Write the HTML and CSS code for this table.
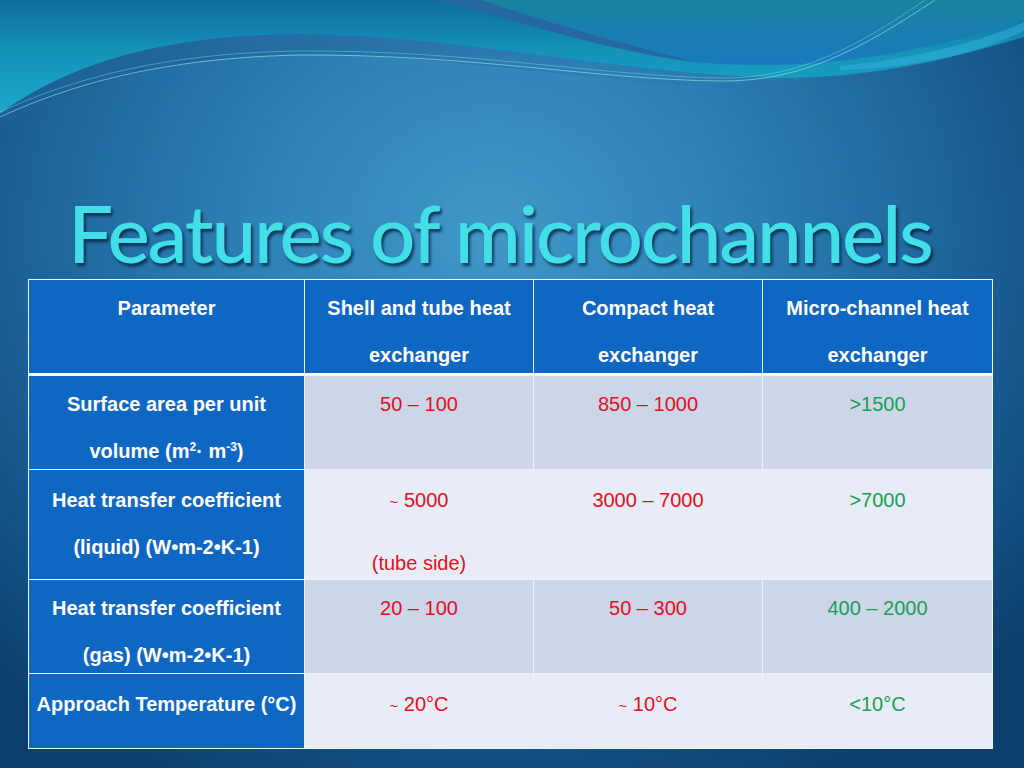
FILE: index.html
```html
<!DOCTYPE html>
<html lang="en">
<head>
<meta charset="utf-8">
<title>Features of microchannels</title>
<link rel="stylesheet" href="styles.css">
</head>
<body>
<div class="slide">
  <svg class="wave" width="1024" height="140" viewBox="0 0 1024 140" aria-hidden="true">
    <defs>
      <linearGradient id="gTop" x1="0" y1="0" x2="0" y2="1">
        <stop offset="0" stop-color="#0f6c9e"/>
        <stop offset="0.45" stop-color="#1594b8"/>
        <stop offset="1" stop-color="#1aa8c8"/>
      </linearGradient>
      <linearGradient id="gRight" x1="0" y1="0" x2="0" y2="1">
        <stop offset="0" stop-color="#17849f"/>
        <stop offset="1" stop-color="#1a7abf"/>
      </linearGradient>
      <linearGradient id="gBand" x1="0" y1="0" x2="1" y2="0">
        <stop offset="0" stop-color="#1a5f95" stop-opacity="0.85"/>
        <stop offset="0.45" stop-color="#24689f" stop-opacity="0.6"/>
        <stop offset="0.75" stop-color="#24689f" stop-opacity="0.25"/>
        <stop offset="1" stop-color="#24689f" stop-opacity="0"/>
      </linearGradient>
    </defs>
    <path d="M0,0 L1024,0 L1024,37 C960,56 880,78 780,78 C600,72 470,36 300,34 C150,35 60,70 0,114 Z" fill="url(#gTop)"/>
    <path d="M478,0 C540,20 620,46 705,63 C800,70 900,60 1024,20 L1024,0 Z" fill="url(#gRight)"/>
    <path d="M436,0 C520,22 610,52 706,64 C620,44 540,20 482,0 Z" fill="#2766a0" opacity="0.95"/>
    <path d="M840,66 C920,58 985,40 1024,22 L1024,31 C980,52 920,68 840,70 Z" fill="#35b2dc" opacity="0.5"/>
    <path d="M0,114 C60,70 150,35 300,34 C470,36 600,72 780,78 L780,90 C600,86 450,54 300,54 C160,56 70,88 0,128 Z" fill="url(#gBand)"/>
    <path d="M0,117 C70,85 160,58 300,55 C470,54 600,80 720,81 C800,82 860,50 935,0" fill="none" stroke="#9ae4ef" stroke-width="0.9" opacity="0.7"/>
    <path d="M0,112 C70,80 160,53 300,51 C470,50 600,76 720,78 C800,79 860,45 925,0" fill="none" stroke="#6fd8e6" stroke-width="0.8" opacity="0.6"/>
  </svg>

  <h1 class="title">Features of microchannels</h1>

  <div class="grid">
    <div class="cell head">Parameter</div>
    <div class="cell head">Shell and tube heat<br>exchanger</div>
    <div class="cell head">Compact heat<br>exchanger</div>
    <div class="cell head">Micro-channel heat<br>exchanger</div>

    <div class="cell key">Surface area per unit<br>volume (m<sup>2</sup>· m<sup>-3</sup>)</div>
    <div class="cell odd red">50 – 100</div>
    <div class="cell odd red">850 – 1000</div>
    <div class="cell odd green">&gt;1500</div>

    <div class="cell key low">Heat transfer coefficient<br>(liquid) (W•m-2•K-1)</div>
    <div class="cell even red low"><span class="tilde">~</span> 5000<span class="note">(tube side)</span></div>
    <div class="cell even red low">3000 – 7000</div>
    <div class="cell even green low">&gt;7000</div>

    <div class="cell key">Heat transfer coefficient<br>(gas) (W•m-2•K-1)</div>
    <div class="cell odd red">20 – 100</div>
    <div class="cell odd red">50 – 300</div>
    <div class="cell odd green">400 – 2000</div>

    <div class="cell key low">Approach Temperature (°C)</div>
    <div class="cell even red low"><span class="tilde">~</span> 20°C</div>
    <div class="cell even red low"><span class="tilde">~</span> 10°C</div>
    <div class="cell even green low">&lt;10°C</div>
  </div>
</div>
</body>
</html>
```

FILE: styles.css
```css
html, body {
  margin: 0;
  padding: 0;
}

.slide {
  position: relative;
  width: 1024px;
  height: 768px;
  overflow: hidden;
  background:
    radial-gradient(ellipse 70% 80% at 48% 30%, #4197c8 0%, #3084b8 30%, #1f689e 60%, #134f82 85%, #0c3f6b 100%);
  font-family: "Liberation Sans", Arial, sans-serif;
}

.wave {
  position: absolute;
  left: 0;
  top: 0;
  display: block;
}

.title {
  position: relative;
  margin: 0;
  box-sizing: border-box;
  height: 279px;
  padding: 184px 0 0 68px;
  font-family: Lato, "Open Sans", sans-serif;
  font-weight: 500;
  font-size: 80px;
  line-height: 96px;
  letter-spacing: -2.25px;
  color: #42dfe9;
  text-shadow: 2px 3px 3px rgba(5, 30, 60, 0.75);
  white-space: nowrap;
}

.grid {
  position: relative;
  margin-left: 28px;
  width: 965px;
  box-sizing: border-box;
  display: grid;
  grid-template-columns: 275px 228px 228px 229px;
  grid-template-rows: 95px 93px 109px 93px 74px;
  gap: 1px;
  border: 1px solid #eef2fa;
  background: #eef2fa;
  font-size: 20px;
  line-height: 47px;
  text-align: center;
}

.cell {
  padding-top: 5px;
  overflow: visible;
  white-space: nowrap;
}

.cell.low {
  padding-top: 7px;
}

.head {
  background: #0f67c4;
  color: #ffffff;
  font-weight: 700;
  border-bottom: 2px solid #ffffff;
}

.key {
  background: #0f67c4;
  color: #ffffff;
  font-weight: 700;
}

.key sup {
  font-size: 12px;
  line-height: 0;
  vertical-align: 7px;
}

.odd { background: #cdd5e9; }
.even { background: #e8ecf6; }

.red { color: #e2101d; }
.green { color: #17a052; }

.tilde {
  font-size: 15px;
}

.note {
  display: block;
  margin-top: 15px;
}
```
